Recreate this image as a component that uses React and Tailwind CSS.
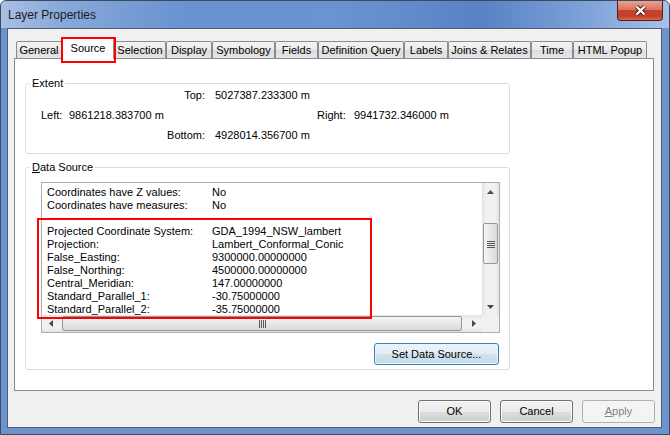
import React from "react";

// Windows 7 style "Layer Properties" dialog (Source tab)

const tabs = [
  { label: "General", w: "w-[46px]" },
  { label: "Source", w: "w-[52px]", active: true },
  { label: "Selection", w: "w-[52px]" },
  { label: "Display", w: "w-[46px]" },
  { label: "Symbology", w: "w-[63px]" },
  { label: "Fields", w: "w-[43px]" },
  { label: "Definition Query", w: "w-[86px]" },
  { label: "Labels", w: "w-[44px]" },
  { label: "Joins & Relates", w: "w-[83px]" },
  { label: "Time", w: "w-[42px]" },
  { label: "HTML Popup", w: "w-[74px]" },
];

const rows = [
  ["Coordinates have Z values:", "No"],
  ["Coordinates have measures:", "No"],
  ["", ""],
  ["Projected Coordinate System:", "GDA_1994_NSW_lambert"],
  ["Projection:", "Lambert_Conformal_Conic"],
  ["False_Easting:", "9300000.00000000"],
  ["False_Northing:", "4500000.00000000"],
  ["Central_Meridian:", "147.00000000"],
  ["Standard_Parallel_1:", "-30.75000000"],
  ["Standard_Parallel_2:", "-35.75000000"],
];

const Tab = ({ label, w, active }) =>
  active ? (
    <div
      className={`relative z-10 -mb-px h-[22px] ${w} flex items-center justify-center bg-white border border-b-0 border-[#898c95] rounded-t-[2px] pb-[1px]`}
    >
      {label}
      {/* red annotation box */}
      <div className="absolute left-[-2px] right-[-3px] top-[-1px] bottom-[-4px] border-2 border-[#ff0000]" />
    </div>
  ) : (
    <div
      className={`h-[17px] ${w} flex items-center justify-center border border-b-0 border-[#898c95] rounded-t-[2px] bg-[linear-gradient(#f3f3f3_0%,#ebebeb_50%,#dddddd_51%,#e4e4e4_100%)]`}
    >
      {label}
    </div>
  );

const Button = ({ children, className = "" }) => (
  <button
    className={`h-[23px] w-[73px] rounded-[3px] border border-[#707070] bg-[linear-gradient(#f2f2f2_0%,#ebebeb_50%,#dddddd_51%,#cfcfcf_100%)] shadow-[inset_0_0_0_1px_#fbfbfb] leading-none ${className}`}
  >
    {children}
  </button>
);

const ArrowUp = () => (
  <svg width="7" height="4" viewBox="0 0 7 4">
    <path d="M0 4 L3.5 0 L7 4Z" fill="#4a4a4a" />
  </svg>
);
const ArrowDown = () => (
  <svg width="7" height="4" viewBox="0 0 7 4">
    <path d="M0 0 L3.5 4 L7 0Z" fill="#4a4a4a" />
  </svg>
);
const ArrowLeft = () => (
  <svg width="4" height="7" viewBox="0 0 4 7">
    <path d="M4 0 L0 3.5 L4 7Z" fill="#4a4a4a" />
  </svg>
);
const ArrowRight = () => (
  <svg width="4" height="7" viewBox="0 0 4 7">
    <path d="M0 0 L4 3.5 L0 7Z" fill="#4a4a4a" />
  </svg>
);

const VScroll = () => (
  <div className="w-[17px] h-full flex flex-col bg-[linear-gradient(90deg,#e3e3e3,#f1f1f1_25%,#f1f1f1_75%,#e3e3e3)]">
    <div className="h-[17px] flex items-center justify-center">
      <ArrowUp />
    </div>
    <div className="flex-1 pt-[23px]">
      <div className="mx-[1px] h-[41px] rounded-[2px] border border-[#979797] bg-[linear-gradient(90deg,#f4f4f4,#e8e8e8_50%,#d9d9d9)] flex items-center justify-center">
        <svg width="8" height="8" viewBox="0 0 8 8">
          <path d="M0 1.5H8M0 3.5H8M0 5.5H8M0 7.5H8" stroke="#5a5a5a" strokeWidth="1" />
        </svg>
      </div>
    </div>
    <div className="h-[17px] flex items-center justify-center">
      <ArrowDown />
    </div>
  </div>
);

const HScroll = () => (
  <div className="w-[440px] h-full flex bg-[linear-gradient(#e3e3e3,#f1f1f1_25%,#f1f1f1_75%,#e3e3e3)]">
    <div className="w-[17px] flex items-center justify-center">
      <ArrowLeft />
    </div>
    <div className="flex-1 pl-[3px] pr-[3px]">
      <div className="my-[1px] h-[15px] rounded-[2px] border border-[#979797] bg-[linear-gradient(#f4f4f4,#e8e8e8_50%,#d9d9d9)] flex items-center justify-center">
        <svg width="8" height="8" viewBox="0 0 8 8">
          <path d="M1.5 0V8M3.5 0V8M5.5 0V8M7.5 0V8" stroke="#5a5a5a" strokeWidth="1" />
        </svg>
      </div>
    </div>
    <div className="w-[17px] flex items-center justify-center">
      <ArrowRight />
    </div>
  </div>
);

export default function App() {
  return (
    <div className="w-[670px] h-[435px] flex flex-col overflow-hidden border border-[#3b4a60] rounded-t-[6px] bg-[#6d93cc] font-['Liberation_Sans',Arial,sans-serif] text-[11px] text-black">
      {/* Title bar */}
      <div className="h-[27px] flex items-start justify-between bg-[linear-gradient(90deg,#a7bfe4_0%,#86a7d9_10%,#6992cf_28%,#6a94d0_50%,#5882c4_72%,#7fa3d9_88%,#a8c1e6_100%)]">
        <span className="ml-[7px] mt-[7px] text-[12px] leading-[15px] text-[#1b1b1b]">
          Layer Properties
        </span>
        <button className="mr-[6px] w-[46px] h-[20px] rounded-b-[4px] border border-t-0 border-[#5a1d15] bg-[linear-gradient(#e8a493_0%,#d9735f_45%,#c7432c_50%,#c2412b_80%,#d86a4c_100%)] flex items-center justify-center">
          <svg width="13" height="11" viewBox="0 0 13 11">
            <path d="M2.5 1.5 L10.5 9.5 M10.5 1.5 L2.5 9.5" stroke="#4b1710" strokeWidth="4.2" />
            <path d="M2.5 1.5 L10.5 9.5 M10.5 1.5 L2.5 9.5" stroke="#ffffff" strokeWidth="2.4" />
          </svg>
        </button>
      </div>

      {/* Dialog body */}
      <div className="flex-1 ml-[6px] mr-[7px] mb-[6px] flex flex-col border border-[#4e5f78] bg-[#f0f0f0]">
        {/* Tabs */}
        <div className="mt-[8px] ml-[8px] h-[21px] flex items-end">
          {tabs.map((t) => (
            <Tab key={t.label} {...t} />
          ))}
        </div>

        {/* Tab panel */}
        <div className="ml-[6px] w-[640px] h-[333px] border border-[#898c95] bg-white">
          {/* Extent */}
          <fieldset className="mt-[18px] ml-[10px] w-[485px] border border-[#d5dfe5] rounded-[3px] pb-[11px]">
            <legend className="ml-[4px] px-[2px] leading-[12px]">Extent</legend>
            <div className="flex h-[13px] leading-[13px]">
              <span className="w-[179px] text-right">Top:</span>
              <span className="ml-[10px]">5027387.233300 m</span>
            </div>
            <div className="flex h-[13px] leading-[13px] mt-[7px] pl-[15px]">
              <span className="w-[28px]">Left:</span>
              <span className="w-[248px]">9861218.383700 m</span>
              <span className="w-[37px]">Right:</span>
              <span>9941732.346000 m</span>
            </div>
            <div className="flex h-[13px] leading-[13px] mt-[7px]">
              <span className="w-[179px] text-right">Bottom:</span>
              <span className="ml-[10px]">4928014.356700 m</span>
            </div>
          </fieldset>

          {/* Data Source */}
          <fieldset className="mt-[7px] ml-[10px] w-[485px] border border-[#d5dfe5] rounded-[3px] pb-[4px]">
            <legend className="ml-[4px] px-[2px] leading-[12px]">
              <span className="underline">D</span>ata Source
            </legend>
            <div className="relative ml-[15px] mt-[9px] w-[459px] h-[151px] border border-[#abadb3] bg-white flex flex-col">
              <div className="flex h-[132px]">
                <div className="w-[440px] overflow-hidden pt-[3px] pl-[5px]">
                  {rows.map(([k, v], i) => (
                    <div key={i} className="flex h-[13px] leading-[13px] whitespace-nowrap">
                      <span className="w-[165px]">{k}</span>
                      <span>{v}</span>
                    </div>
                  ))}
                </div>
                <VScroll />
              </div>
              <div className="flex h-[17px]">
                <HScroll />
                <div className="w-[17px] bg-[#f0f0f0]" />
              </div>
              {/* red annotation box */}
              <div className="absolute left-[-5px] top-[35px] w-[335px] h-[101px] border-2 border-[#ff0000]" />
            </div>
            <div className="ml-[15px] mt-[10px] w-[459px] flex justify-end">
              <button className="mr-[1px] w-[125px] h-[22px] rounded-[3px] border border-[#3c7fb1] bg-[linear-gradient(#eef5fa_0%,#e2ecf4_50%,#d1e2ee_51%,#c4d9e8_100%)] shadow-[inset_0_0_0_1px_#e6f4fc] leading-none">
                Set Data Source...
              </button>
            </div>
          </fieldset>
        </div>

        {/* Dialog buttons */}
        <div className="mt-[9px] mr-[6px] flex justify-end gap-[9px]">
          <Button>OK</Button>
          <Button>Cancel</Button>
          <button className="h-[23px] w-[73px] rounded-[3px] border border-[#adb2b5] bg-[#f4f4f4] text-[#838383] leading-none">
            <span className="underline">A</span>pply
          </button>
        </div>
      </div>
    </div>
  );
}
